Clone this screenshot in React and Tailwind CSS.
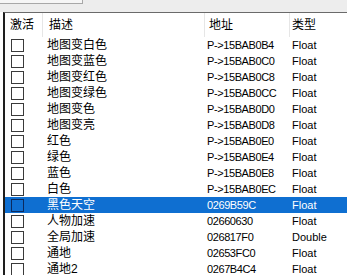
const ROWS = [
  ["地图变白色", "P->15BAB0B4", "Float"],
  ["地图变蓝色", "P->15BAB0C0", "Float"],
  ["地图变红色", "P->15BAB0C8", "Float"],
  ["地图变绿色", "P->15BAB0CC", "Float"],
  ["地图变色", "P->15BAB0D0", "Float"],
  ["地图变亮", "P->15BAB0D8", "Float"],
  ["红色", "P->15BAB0E0", "Float"],
  ["绿色", "P->15BAB0E4", "Float"],
  ["蓝色", "P->15BAB0E8", "Float"],
  ["白色", "P->15BAB0EC", "Float"],
  ["黑色天空", "0269B59C", "Float"],
  ["人物加速", "02660630", "Float"],
  ["全局加速", "026817F0", "Double"],
  ["通地", "02653FC0", "Float"],
  ["通地2", "0267B4C4", "Float"],
];

const SELECTED = 10;

export default function App() {
  return (
    <div
      className="h-[275px] w-[347px] overflow-hidden bg-white text-black"
      style={{ fontFamily: '"Liberation Sans", "Noto Sans CJK SC", sans-serif' }}
    >
      {/* Toolbar strip */}
      <div className="h-[12px] bg-[#ededed]">
        <div className="h-[4px] w-[83px] border-b border-r border-[#a8a8a8] bg-[#f6f6f6]" />
      </div>

      <div className="flex">
        <div className="w-[3px] shrink-0" />
        <div className="min-w-0 flex-1 border-l-2 border-t border-l-[#1e1e1e] border-t-[#6a6a6a]">
          {/* Header */}
          <div className="flex h-[24px] items-center text-[12px]">
            <div className="flex h-full w-[38px] items-center border-r border-[#e6e6e6] pl-[5px]">激活</div>
            <div className="flex h-full w-[162px] items-center border-r border-[#e6e6e6] pl-[6px]">描述</div>
            <div className="flex h-full w-[85px] items-center border-r border-[#e6e6e6] pl-[4px]">地址</div>
            <div className="flex h-full flex-1 items-center pl-[2px]">类型</div>
          </div>

          {/* Rows */}
          {ROWS.map(([desc, addr, type], i) => {
            const sel = i === SELECTED;
            return (
              <div
                key={i}
                className={`flex h-[16px] items-center ${sel ? "bg-[#0f6fd1] text-white" : ""}`}
              >
                <div className="flex w-[38px] items-center pl-[6px]">
                  <div
                    className={`h-[13px] w-[13px] border ${
                      sel ? "border-[#0b2a5e] bg-[#0f6fd1]" : "border-[#3a3a3a] bg-white"
                    }`}
                  />
                </div>
                <div className="w-[162px] pl-[4px] text-[12px] leading-none">{desc}</div>
                <div className="w-[85px] pl-[2px] text-[11px] leading-none tracking-[-0.4px]">{addr}</div>
                <div className="flex-1 pl-[2px] text-[11px] leading-none">{type}</div>
              </div>
            );
          })}
        </div>
      </div>
    </div>
  );
}
